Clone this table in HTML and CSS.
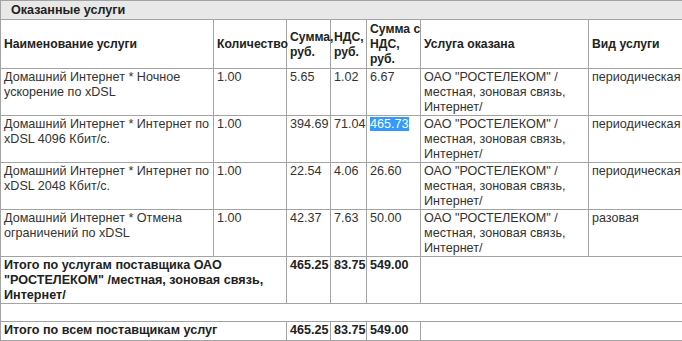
FILE: index.html
```html
<!DOCTYPE html>
<html lang="ru">
<head>
<meta charset="utf-8">
<title>Оказанные услуги</title>
<link rel="stylesheet" href="styles.css">
</head>
<body>
<div class="frame">
<table class="services">
  <colgroup>
    <col class="c-name">
    <col class="c-qty">
    <col class="c-sum">
    <col class="c-vat">
    <col class="c-total">
    <col class="c-provider">
    <col class="c-kind">
  </colgroup>
  <tr class="caption-row"><td colspan="7">Оказанные услуги</td></tr>
  <tr class="head-row">
    <th>Наименование услуги</th>
    <th>Количество</th>
    <th>Сумма, руб.</th>
    <th>НДС, руб.</th>
    <th>Сумма&nbsp;с НДС, руб.</th>
    <th>Услуга оказана</th>
    <th>Вид услуги</th>
  </tr>
  <tr>
    <td>Домашний Интернет * Ночное ускорение по xDSL</td>
    <td>1.00</td><td>5.65</td><td>1.02</td><td>6.67</td>
    <td>ОАО "РОСТЕЛЕКОМ" / местная, зоновая связь, Интернет/</td>
    <td>периодическая</td>
  </tr>
  <tr>
    <td>Домашний Интернет * Интернет по xDSL 4096 Кбит/с.</td>
    <td>1.00</td><td>394.69</td><td>71.04</td><td><span class="sel">465.73</span></td>
    <td>ОАО "РОСТЕЛЕКОМ" / местная, зоновая связь, Интернет/</td>
    <td>периодическая</td>
  </tr>
  <tr>
    <td>Домашний Интернет * Интернет по xDSL 2048 Кбит/с.</td>
    <td>1.00</td><td>22.54</td><td>4.06</td><td>26.60</td>
    <td>ОАО "РОСТЕЛЕКОМ" / местная, зоновая связь, Интернет/</td>
    <td>периодическая</td>
  </tr>
  <tr>
    <td>Домашний Интернет * Отмена ограничений по xDSL</td>
    <td>1.00</td><td>42.37</td><td>7.63</td><td>50.00</td>
    <td>ОАО "РОСТЕЛЕКОМ" / местная, зоновая связь, Интернет/</td>
    <td>разовая</td>
  </tr>
  <tr class="sum-row">
    <td colspan="2">Итого по услугам поставщика ОАО "РОСТЕЛЕКОМ" /местная, зоновая связь, Интернет/</td>
    <td>465.25</td><td>83.75</td><td>549.00</td>
    <td colspan="2"></td>
  </tr>
  <tr class="gap-row"><td colspan="7"></td></tr>
  <tr class="sum-row last-row">
    <td colspan="2">Итого по всем поставщикам услуг</td>
    <td>465.25</td><td>83.75</td><td>549.00</td>
    <td colspan="2"></td>
  </tr>
</table>
</div>
</body>
</html>
```

FILE: styles.css
```css
html, body {
  margin: 0;
  padding: 0;
  background: #fff;
}
.frame {
  width: 682px;
  overflow: hidden;
}
.services {
  border-collapse: collapse;
  table-layout: fixed;
  width: 698px;
  font-family: "Liberation Sans", Arial, sans-serif;
  font-size: 12.6px;
  line-height: 15px;
  color: #333;
}
.c-name { width: 213px; }
.c-qty { width: 73px; }
.c-sum { width: 44px; }
.c-vat { width: 36px; }
.c-total { width: 54px; }
.c-provider { width: 168px; }
.c-kind { width: 110px; }

.services td,
.services th {
  border: 1px solid #a3a3a3;
  padding: 1px 1px 0 3px;
  vertical-align: top;
  text-align: left;
  white-space: normal;
}
.caption-row td {
  background: #e8e8e8;
  font-weight: bold;
  color: #222;
  padding: 2px 10px 1px;
}
.head-row th {
  font-size: 12.2px;
  font-weight: bold;
  color: #222;
  vertical-align: middle;
  padding-top: 2px;
  padding-bottom: 1px;
}
.sum-row td {
  font-weight: bold;
  color: #222;
}
.gap-row td {
  height: 16px;
}
.last-row td {
  padding-bottom: 2px;
}
.sel {
  background: #3399ff;
  color: #fff;
}
```
